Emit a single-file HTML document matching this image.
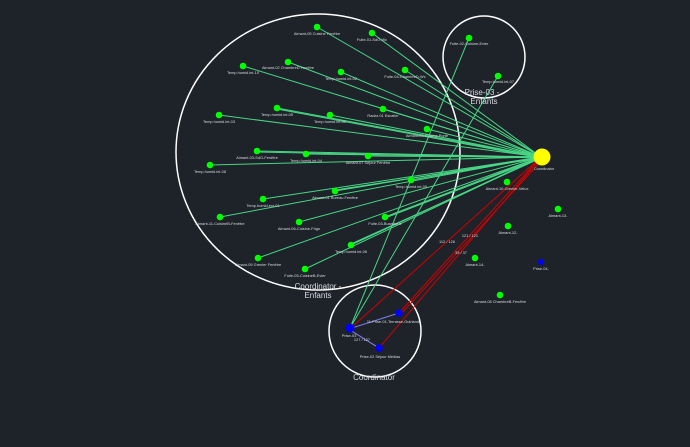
<!DOCTYPE html>
<html><head><meta charset="utf-8"><style>
html,body{margin:0;padding:0;background:#1e2229;width:690px;height:447px;overflow:hidden}
svg{display:block}
text{font-family:"Liberation Sans",sans-serif;fill:#d8dce0}
.l{font-size:3.9px;text-anchor:middle}
.g{font-size:8px;text-anchor:middle;fill:#e8e8e8}
</style></head><body>
<svg width="690" height="447" viewBox="0 0 690 447" xmlns="http://www.w3.org/2000/svg">
<rect width="690" height="447" fill="#1e2229"/>
<g fill="none" stroke="#fff" stroke-width="1.5">
<ellipse cx="318" cy="152" rx="142" ry="138"/>
<circle cx="484" cy="57" r="41"/>
<circle cx="375" cy="331" r="46"/>
</g>
<g stroke="#4ae08a" stroke-width="1" opacity="0.95">
<line x1="317" y1="27" x2="541" y2="157"/>
<line x1="372" y1="33" x2="541" y2="157"/>
<line x1="288" y1="62" x2="541" y2="157"/>
<line x1="243" y1="66" x2="541" y2="157"/>
<line x1="341" y1="72" x2="541" y2="157"/>
<line x1="405" y1="70" x2="541" y2="157"/>
<line x1="277" y1="108" x2="541" y2="157"/>
<line x1="277" y1="109" x2="541" y2="158"/>
<line x1="219" y1="115" x2="541" y2="157"/>
<line x1="330" y1="115" x2="541" y2="157"/>
<line x1="383" y1="109" x2="541" y2="157"/>
<line x1="427" y1="129" x2="541" y2="157"/>
<line x1="257" y1="151" x2="541" y2="157"/>
<line x1="257" y1="152" x2="541" y2="158"/>
<line x1="306" y1="154" x2="541" y2="157"/>
<line x1="368" y1="156" x2="541" y2="157"/>
<line x1="210" y1="165" x2="541" y2="157"/>
<line x1="411" y1="180" x2="541" y2="157"/>
<line x1="335" y1="191" x2="541" y2="157"/>
<line x1="335" y1="190" x2="541" y2="158"/>
<line x1="263" y1="199" x2="541" y2="157"/>
<line x1="220" y1="217" x2="541" y2="157"/>
<line x1="299" y1="222" x2="541" y2="157"/>
<line x1="385" y1="217" x2="541" y2="157"/>
<line x1="385" y1="218" x2="541" y2="158"/>
<line x1="351" y1="245" x2="541" y2="157"/>
<line x1="351" y1="244" x2="541" y2="158"/>
<line x1="258" y1="258" x2="541" y2="157"/>
<line x1="305" y1="269" x2="541" y2="157"/>
<line x1="469" y1="38" x2="350" y2="328"/>
<line x1="498" y1="76" x2="350" y2="328"/>
</g>
<g stroke="#d00000" stroke-width="1">
<line x1="541" y1="157" x2="352" y2="327"/>
<line x1="541" y1="157" x2="399" y2="313"/>
<line x1="543" y1="159" x2="401" y2="314"/>
<line x1="541" y1="158" x2="379" y2="348"/>
</g>
<g stroke="#7a7ae0" stroke-width="1.1">
<line x1="399" y1="313" x2="352" y2="328"/>
<line x1="350" y1="330" x2="379" y2="348"/>
</g>
<g fill="#00ff00">
<circle cx="317" cy="27" r="3.3"/><circle cx="372" cy="33" r="3.3"/>
<circle cx="288" cy="62" r="3.3"/><circle cx="243" cy="66" r="3.3"/>
<circle cx="341" cy="72" r="3.3"/><circle cx="405" cy="70" r="3.3"/>
<circle cx="277" cy="108" r="3.3"/><circle cx="219" cy="115" r="3.3"/>
<circle cx="330" cy="115" r="3.3"/><circle cx="383" cy="109" r="3.3"/>
<circle cx="427" cy="129" r="3.3"/><circle cx="257" cy="151" r="3.3"/>
<circle cx="306" cy="154" r="3.3"/><circle cx="368" cy="156" r="3.3"/>
<circle cx="210" cy="165" r="3.3"/><circle cx="411" cy="180" r="3.3"/>
<circle cx="335" cy="191" r="3.3"/><circle cx="263" cy="199" r="3.3"/>
<circle cx="220" cy="217" r="3.3"/><circle cx="299" cy="222" r="3.3"/>
<circle cx="385" cy="217" r="3.3"/><circle cx="351" cy="245" r="3.3"/>
<circle cx="258" cy="258" r="3.3"/><circle cx="305" cy="269" r="3.3"/>
<circle cx="469" cy="38" r="3.3"/><circle cx="498" cy="76" r="3.3"/>
<circle cx="507" cy="182" r="3.3"/><circle cx="558" cy="209" r="3.3"/>
<circle cx="508" cy="226" r="3.3"/><circle cx="475" cy="258" r="3.3"/>
<circle cx="500" cy="295" r="3.3"/>
</g>
<circle cx="542" cy="157" r="8.5" fill="#ffff00"/>
<g fill="#0000ff">
<circle cx="350" cy="328" r="4.5"/><circle cx="399" cy="313" r="3.7"/>
<circle cx="379" cy="348" r="3.7"/><circle cx="541" cy="262" r="3"/>
</g>
<g class="l">
<text x="317" y="35">Aimant-05 Cuisine Fenêtre</text>
<text x="372" y="41">Fuite-01-SdO-Wc</text>
<text x="288" y="69">Aimant-02 ChambreD Fenêtre</text>
<text x="243" y="74">Temp.humid.int-10</text>
<text x="341" y="80">Temp.humid.int-02</text>
<text x="405" y="78">Fuite-04-ChambreD-Wc</text>
<text x="277" y="116">Temp.humid.int-05</text>
<text x="219" y="123">Temp.humid.int-03</text>
<text x="330" y="123">Temp.humid.int-01</text>
<text x="383" y="117">Radar-01 Escalier</text>
<text x="427" y="137">Aimant-04 Cuisine Porte</text>
<text x="257" y="159">Aimant-03-SdO-Fenêtre</text>
<text x="306" y="162">Temp.humid.int-04</text>
<text x="368" y="164">Aimant-07 Séjour Fenêtre</text>
<text x="210" y="173">Temp.humid.int-08</text>
<text x="411" y="188">Temp.humid.int-09</text>
<text x="335" y="199">Aimant-01 Bureau Fenêtre</text>
<text x="263" y="207">Temp.humid.ext-01</text>
<text x="220" y="225">Aimant-11-CuisineB-Fenêtre</text>
<text x="299" y="230">Aimant-06-Cuisine-Frigo</text>
<text x="385" y="225">Fuite-03-Buanderie</text>
<text x="351" y="253">Temp.humid.int-06</text>
<text x="258" y="266">Aimant-09 Grenier Fenêtre</text>
<text x="305" y="277">Fuite-05-CuisineB-Evier</text>
<text x="469" y="45">Fuite-02-Cuisine-Evier</text>
<text x="498" y="83">Temp.humid.int-07</text>
<text x="544" y="170">Coordinator</text>
<text x="507" y="190">Aimant-10-Grenier-Velux</text>
<text x="558" y="217">Aimant-13-</text>
<text x="508" y="234">Aimant-12-</text>
<text x="475" y="266">Aimant-14-</text>
<text x="541" y="270">Prise-04-</text>
<text x="500" y="303">Aimant-08 ChambreB-Fenêtre</text>
<text x="349" y="337">Prise-03</text>
<text x="394" y="323">11-Prise-01-Terrasse-Guirlande</text>
<text x="380" y="358">Prise-02 Séjour Médias</text>
<text x="362" y="341">127 / 127</text>
<text x="447" y="243">112 / 126</text>
<text x="470" y="237">121 / 121</text>
<text x="461" y="254">35 / 37</text>
</g>
<g class="g">
<text x="318" y="289">Coordinator -</text>
<text x="318" y="298">Enfants</text>
<text x="482" y="95">Prise-03 -</text>
<text x="484" y="104">Enfants</text>
<text x="374" y="380">Coordinator</text>
</g>
</svg>
</body></html>
